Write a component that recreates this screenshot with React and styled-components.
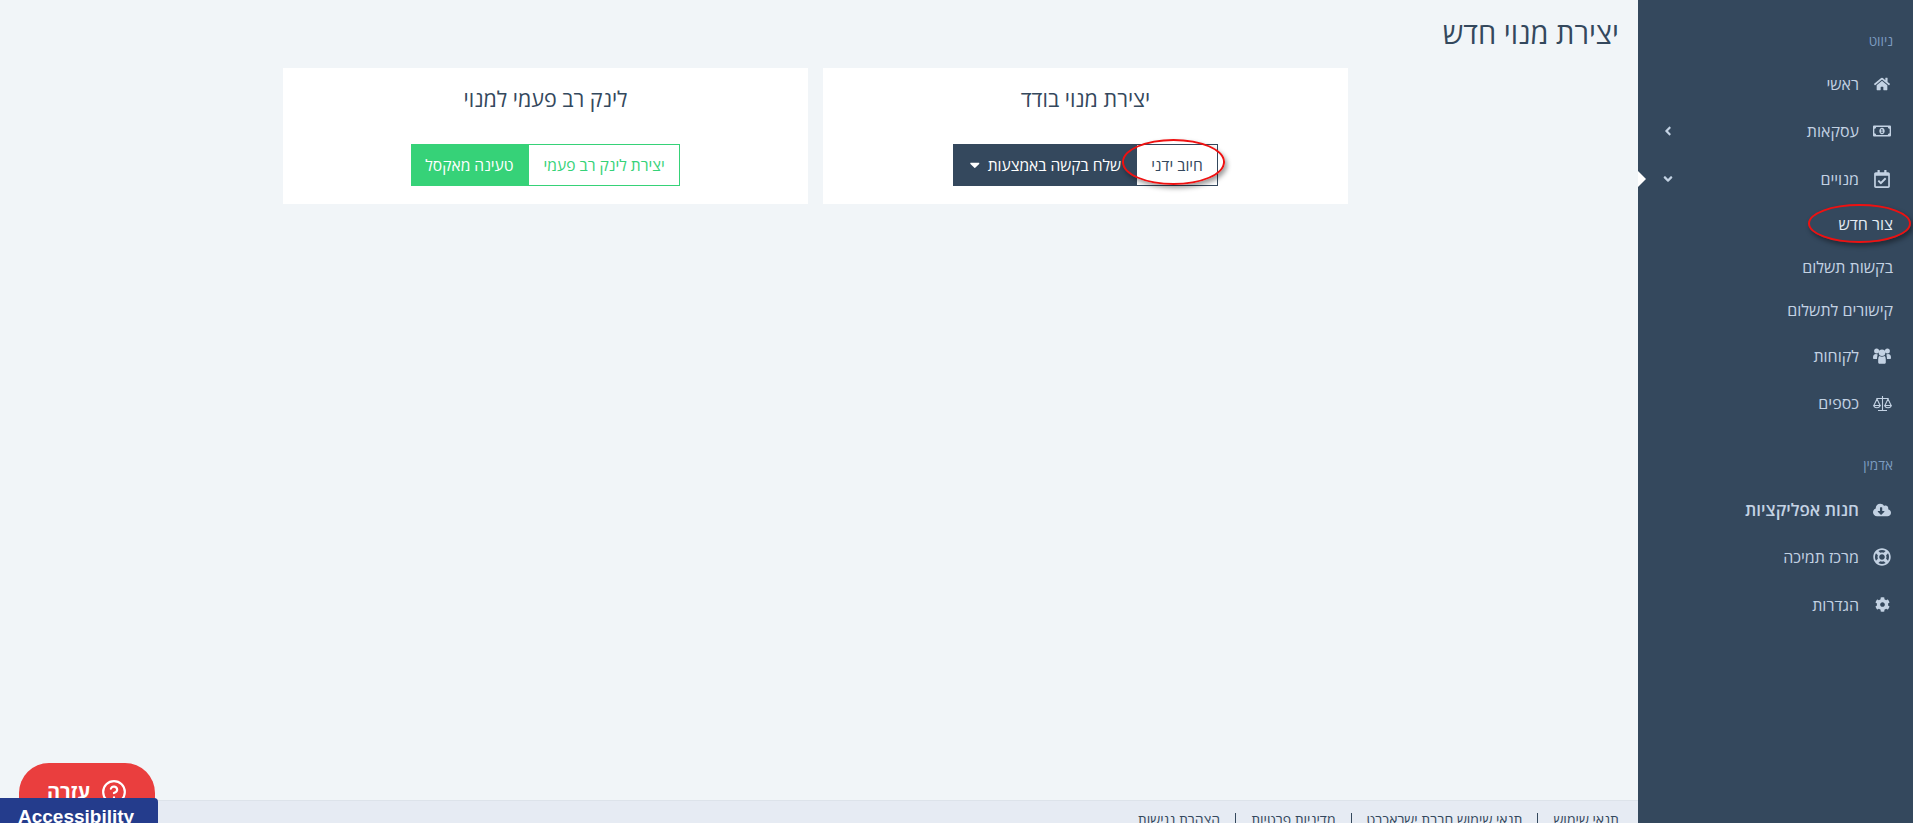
import React from "react";
import styled, { createGlobalStyle } from "styled-components";
import {
  FaHome,
  FaRegMoneyBillAlt,
  FaRegCalendarCheck,
  FaCloudDownloadAlt,
  FaRegLifeRing,
  FaCog,
  FaAngleLeft,
  FaAngleDown,
  FaCaretDown,
} from "react-icons/fa";
import { CircleHelp } from "lucide-react";

const DARK = "#34485d";
const GREEN = "#36d278";

const GlobalStyle = createGlobalStyle`
  html, body {
    margin: 0;
    padding: 0;
    overflow: hidden;
    background: #f1f5f8;
    font-family: "Open Sans", "Liberation Sans", Arial, sans-serif;
  }
  * { box-sizing: border-box; }
`;

// the outlined scales icon from the menu
function ScalesIcon() {
  return (
    <svg width="19" height="17" viewBox="0 0 19 17" fill="none" stroke="currentColor" strokeWidth="1.1">
      <path d="M9.5 1v14M5 15.500h9M3.500 3.500h12" />
      <path d="M4 4 .9 10.500h6.200zM15 4l-3.100 6.500h6.200z" />
      <path d="M.9 10.500a3.100 2.200 0 0 0 6.200 0M11.900 10.500a3.100 2.200 0 0 0 6.200 0" />
    </svg>
  );
}

// three people, the front one larger
function UsersIcon() {
  return (
    <svg width="18" height="16" viewBox="0 0 18 16" fill="currentColor">
      <circle cx="3.600" cy="3" r="2.500" />
      <circle cx="14.400" cy="3" r="2.500" />
      <circle cx="9" cy="4.800" r="3.300" />
      <path d="M0 10c0-3 1-4 3-4 .6 0 1.200.2 1.700.5C4.300 8 4 9.500 4 11H1.200C.5 11 0 10.600 0 10zM18 10c0-3-1-4-3-4-.6 0-1.200.2-1.700.5.4 1.500.7 3 .7 4.500h2.800c.7 0 1.200-.4 1.200-1z" />
      <path d="M5.200 14.400C5 10.500 5.500 8.300 6.500 8c.7.5 1.600.8 2.500.8s1.800-.3 2.500-.8c1 .3 1.500 2.500 1.300 6.400-.1.800-.7 1.300-1.500 1.300H6.700c-.8 0-1.400-.5-1.500-1.300z" />
    </svg>
  );
}

function App() {
  return (
    <Page dir="rtl">
      <GlobalStyle />
      <Sidebar>
        <NavLabel>ניווט</NavLabel>
        <NavItem><NavIcon $size={16}><FaHome /></NavIcon>ראשי</NavItem>
        <NavItem>
          <NavIcon><FaRegMoneyBillAlt /></NavIcon>עסקאות
          <Chevron><FaAngleLeft /></Chevron>
        </NavItem>
        <NavItem $active>
          <NavIcon><FaRegCalendarCheck /></NavIcon>מנויים
          <Chevron><FaAngleDown /></Chevron>
        </NavItem>
        <SubItem $bright>
          <AnnotatedText>
            צור חדש
            <SideCircle />
          </AnnotatedText>
        </SubItem>
        <SubItem>בקשות תשלום</SubItem>
        <SubItem>קישורים לתשלום</SubItem>
        <NavItem><NavIcon><UsersIcon /></NavIcon>לקוחות</NavItem>
        <NavItem><NavIcon><ScalesIcon /></NavIcon>כספים</NavItem>
        <NavLabel $second>אדמין</NavLabel>
        <NavItem $strong><NavIcon><FaCloudDownloadAlt /></NavIcon>חנות אפליקציות</NavItem>
        <NavItem><NavIcon><FaRegLifeRing /></NavIcon>מרכז תמיכה</NavItem>
        <NavItem><NavIcon $size={15}><FaCog /></NavIcon>הגדרות</NavItem>
      </Sidebar>

      <Main>
        <Title>יצירת מנוי חדש</Title>
        <Cards>
          <Card>
            <CardTitle>יצירת מנוי בודד</CardTitle>
            <BtnGroup>
              <OutlineBtn>
                חיוב ידני
                <BtnCircle />
              </OutlineBtn>
              <SolidBtn>
                שלח בקשה באמצעות <FaCaretDown />
              </SolidBtn>
            </BtnGroup>
          </Card>
          <Card>
            <CardTitle>לינק רב פעמי למנוי</CardTitle>
            <BtnGroup>
              <OutlineBtn $green>יצירת לינק רב פעמי</OutlineBtn>
              <SolidBtn $green>טעינה מאקסל</SolidBtn>
            </BtnGroup>
          </Card>
        </Cards>

        <Footer>
          <FooterLink>תנאי שימוש</FooterLink>
          <FooterLink>תנאי שימוש חברת ישראכרט</FooterLink>
          <FooterLink>מדיניות פרטיות</FooterLink>
          <FooterLink>הצהרת נגישות</FooterLink>
        </Footer>
      </Main>

      <HelpButton>
        <CircleHelp size={26} strokeWidth={2} /> עזרה
      </HelpButton>
      <AccessTab dir="ltr">Accessibility</AccessTab>
    </Page>
  );
}

const Page = styled.div`
  position: relative;
  display: flex;
  width: 100%;
  height: 823px;
  overflow: hidden;
`;

const Sidebar = styled.nav`
  flex: 0 0 275px;
  background: ${DARK};
  color: #c3d2e3;
  padding-top: 32px;
`;

const NavLabel = styled.div`
  font-size: 13.5px;
  line-height: 18px;
  color: #7d9cc0;
  padding-right: 20px;
  margin-top: ${(p) => (p.$second ? "29.5px" : "0")};
  margin-bottom: ${(p) => (p.$second ? "11.5px" : "10px")};
`;

const NavItem = styled.div`
  position: relative;
  display: flex;
  align-items: center;
  height: 47.6px;
  font-size: ${(p) => (p.$strong ? "17px" : "16px")};
  font-weight: ${(p) => (p.$strong ? 600 : 400)};
  padding-right: 21px;

  ${(p) =>
    p.$active &&
    `&::after {
      content: "";
      position: absolute;
      right: 100%;
      top: 50%;
      margin-top: -8px;
      margin-right: -8px;
      width: 0;
      height: 0;
      border-top: 8px solid transparent;
      border-bottom: 8px solid transparent;
      border-left: 8px solid #fff;
    }`}
`;

const NavIcon = styled.span`
  display: inline-flex;
  justify-content: center;
  width: 20px;
  margin-left: 13px;
  font-size: ${(p) => p.$size || 18}px;
  color: #c3d2e3;
`;

const Chevron = styled.span`
  display: inline-flex;
  position: absolute;
  left: 23px;
  top: 50%;
  transform: translateY(-50%);
  font-size: 14px;
`;

const SubItem = styled.div`
  display: flex;
  align-items: center;
  height: 43px;
  font-size: 16px;
  padding-right: 20px;
  color: ${(p) => (p.$bright ? "#e3ebf3" : "#c3d2e3")};
`;

const AnnotatedText = styled.span`
  position: relative;
`;

const Ellipse = styled.span`
  position: absolute;
  border: 2px solid #ee1111;
  border-radius: 50%;
  box-shadow: 2px 3px 5px rgba(0, 0, 0, 0.4);
  pointer-events: none;
`;

const SideCircle = styled(Ellipse)`
  top: -9px;
  bottom: -8px;
  right: -18px;
  left: -30px;
`;

const BtnCircle = styled(Ellipse)`
  top: -6px;
  bottom: 0;
  right: -8px;
  left: -15px;
`;

const Main = styled.main`
  flex: 1;
  display: flex;
  flex-direction: column;
  background: #f1f5f8;
  min-width: 0;
`;

const Title = styled.h1`
  margin: 0;
  padding: 13px 19px 0 0;
  height: 68px;
  font-size: 29px;
  line-height: 40px;
  font-weight: 400;
  color: ${DARK};
`;

const Cards = styled.div`
  display: grid;
  grid-template-columns: 1fr 1fr;
  gap: 15px;
  padding: 0 290px 0 283px;
`;

const Card = styled.section`
  background: #fff;
  height: 136px;
  padding-top: 18px;
  text-align: center;
`;

const CardTitle = styled.h2`
  margin: 0 0 32px;
  font-size: 21.5px;
  line-height: 26px;
  font-weight: 400;
  color: ${DARK};
`;

const BtnGroup = styled.div`
  display: inline-flex;
  height: 42px;
`;

const OutlineBtn = styled.span`
  position: relative;
  display: inline-flex;
  align-items: center;
  padding: 0 14.5px;
  background: #fff;
  border: 1px solid ${(p) => (p.$green ? GREEN : DARK)};
  color: ${(p) => (p.$green ? GREEN : DARK)};
  font-size: 15.6px;
`;

const SolidBtn = styled.span`
  display: inline-flex;
  align-items: center;
  gap: 5px;
  padding: 0 14.5px;
  background: ${(p) => (p.$green ? GREEN : DARK)};
  color: #fff;
  font-size: 15.6px;
`;

const Footer = styled.footer`
  margin-top: auto;
  display: flex;
  height: 23px;
  padding: 12px 19px 0 0;
  background: #e6ebf3;
  border-top: 1px solid #dde3ea;
  font-size: 14px;
  line-height: 14px;
  color: ${DARK};
`;

const FooterLink = styled.span`
  padding: 0 15px;
  border-right: 1px solid ${DARK};
  white-space: nowrap;

  &:first-child {
    padding-right: 0;
    border-right: 0;
  }
`;

const HelpButton = styled.div`
  position: absolute;
  left: 19px;
  top: 763px;
  width: 136px;
  height: 70px;
  padding-top: 16px;
  display: flex;
  justify-content: center;
  gap: 11px;
  border-radius: 30px;
  background: #ea3e3e;
  color: #fff;
  font-size: 20px;
  font-weight: 700;
  line-height: 26px;
`;

const AccessTab = styled.div`
  position: absolute;
  left: 0;
  top: 798px;
  width: 158px;
  height: 30px;
  padding: 9px 0 0 18px;
  background: #243c8c;
  border-top-right-radius: 4px;
  color: #fff;
  font-family: "Liberation Sans", Arial, sans-serif;
  font-size: 19px;
  font-weight: 700;
  line-height: 20px;
`;

export default App;
